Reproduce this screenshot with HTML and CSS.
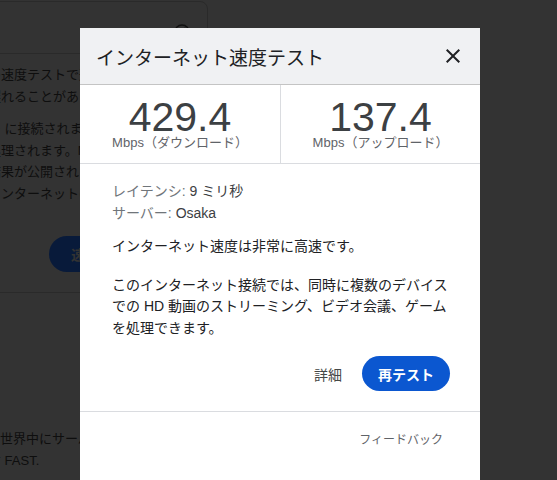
FILE: index.html
```html
<!DOCTYPE html>
<html lang="ja">
<head>
    <meta charset="utf-8">
    <title>インターネット速度テスト</title>
    <link rel="stylesheet" href="styles.css">
</head>
<body>
    <div class="page">
        <div class="bg-card">
            <div class="bg-head">
                <svg class="bg-icon" width="18" height="18" viewBox="0 0 24 24">
                    <circle cx="12" cy="12" r="9.5" fill="none" stroke="#111" stroke-width="2"/>
                    <path d="M12 12 L16 7" stroke="#111" stroke-width="2" stroke-linecap="round"/>
                </svg>
            </div>
            <div class="bg-body">
                <p>接続の品質を確かめるときは、この速度テストで通常約三十秒以内に<br>通常は三十秒以内に完了しますが遅れることがあります。</p>
                <p>テスト中は、端末が測定用サーバー に接続されます。<br>測定中に得られたデータは適切に処理されます。M-Lab<br>測定は外部の研究機関と連携し、結果が公開されます。<br>公開データは誰もが自由に閲覧、インターネットの研究</p>
                <div class="bg-actions">
                    <button class="bg-btn">速度テストを実行</button>
                </div>
            </div>
            <div class="bg-foot">
                <p>このテストは計測ラボと連携して、世界中にサーバーを設置しています。<br>高速な回線の比較には次も便利です FAST.</p>
            </div>
        </div>
    </div>

    <div class="dialog">
        <div class="dialog-head">
            <span class="dialog-title">インターネット速度テスト</span>
            <svg class="close" width="24" height="24" viewBox="0 0 24 24">
                <path d="M19 6.41L17.59 5 12 10.59 6.41 5 5 6.41 10.59 12 5 17.59 6.41 19 12 13.41 17.59 19 19 17.59 13.41 12z" fill="#202124"/>
            </svg>
        </div>
        <div class="stats">
            <div class="stat">
                <div class="stat-value">429.4</div>
                <div class="stat-label">Mbps（ダウンロード）</div>
            </div>
            <div class="stat">
                <div class="stat-value">137.4</div>
                <div class="stat-label">Mbps（アップロード）</div>
            </div>
        </div>
        <div class="dialog-body">
            <div class="meta">
                <div><span class="meta-key">レイテンシ:</span> 9 ミリ秒</div>
                <div><span class="meta-key">サーバー:</span> Osaka</div>
            </div>
            <p class="status">インターネット速度は非常に高速です。</p>
            <p class="desc">このインターネット接続では、同時に複数のデバイスでの HD 動画のストリーミング、ビデオ会議、ゲームを処理できます。</p>
        </div>
        <div class="actions">
            <button class="btn-text">詳細</button>
            <button class="btn-primary">再テスト</button>
        </div>
        <div class="dialog-foot">フィードバック</div>
    </div>
</body>
</html>
```

FILE: styles.css
```css
* {
    box-sizing: border-box;
}
body {
    margin: 0;
    height: 480px;
    overflow: hidden;
    background-color: #333;
    font-family: "Liberation Sans", "Noto Sans CJK JP", sans-serif;
}
p {
    margin: 0;
}
button {
    font-family: inherit;
    border: none;
    cursor: pointer;
}

/* dimmed page behind the dialog */
.page {
    padding-top: 1px;
}
.bg-card {
    width: 440px;
    height: 520px;
    margin-left: -232px;
    border: 1px solid #2a2a2a;
    border-radius: 8px;
    color: #0e0e0e;
    font-size: 13px;
}
.bg-head {
    height: 52px;
    border-bottom: 1px solid #2a2a2a;
    display: flex;
    justify-content: flex-end;
    padding: 21px 16px 0 0;
}
.bg-body {
    padding: 10px 0 20px 24px;
    border-bottom: 1px solid #2a2a2a;
}
.bg-body p,
.bg-foot p {
    line-height: 21.5px;
    white-space: nowrap;
}
.bg-body p + p {
    margin-top: 11px;
}
.bg-actions {
    margin-top: 32px;
    padding-left: 256px;
}
.bg-btn {
    height: 36px;
    padding: 0 22px;
    border-radius: 18px;
    background-color: #081a3a;
    color: #333;
    font-size: 14px;
    font-weight: bold;
}
.bg-foot {
    padding: 135px 0 0 24px;
}

/* dialog */
.dialog {
    position: absolute;
    left: 80px;
    top: 28px;
    width: 400px;
    height: 470px;
    background-color: #fff;
    color: #202124;
}
.dialog-head {
    height: 57px;
    background-color: #f0f1f3;
    border-bottom: 1px solid #c4c4c4;
    display: flex;
    align-items: center;
    justify-content: space-between;
    padding: 0 15px 0 16px;
}
.dialog-title {
    font-size: 19px;
}
.stats {
    display: grid;
    grid-template-columns: 1fr 1fr;
    height: 79px;
    border-bottom: 1px solid #dadce0;
}
.stat {
    text-align: center;
    padding-top: 14px;
}
.stat + .stat {
    border-left: 1px solid #dadce0;
}
.stat-value {
    font-size: 41px;
    line-height: 36px;
    color: #3c4043;
}
.stat-label {
    font-size: 13px;
    line-height: 16px;
    color: #5f6368;
}
.dialog-body {
    padding: 17px 28px 0 32px;
    font-size: 14px;
    line-height: 21.5px;
}
.meta {
    color: #3c4043;
}
.meta-key {
    color: #70757a;
}
.status {
    margin-top: 12px;
}
.desc {
    margin-top: 17px;
}
.actions {
    display: flex;
    justify-content: flex-end;
    align-items: center;
    gap: 8px;
    padding: 17px 30px 20px 0;
    border-bottom: 1px solid #dadce0;
}
.btn-text {
    height: 35px;
    padding: 0 12px;
    background: none;
    color: #444746;
    font-size: 14px;
}
.btn-primary {
    height: 35px;
    padding: 0 16px;
    border-radius: 18px;
    background-color: #0b57d0;
    color: #fff;
    font-size: 14px;
    font-weight: bold;
}
.dialog-foot {
    padding: 20px 37px 0 0;
    text-align: right;
    font-size: 12px;
    line-height: 16px;
    color: #5f6368;
}
```
